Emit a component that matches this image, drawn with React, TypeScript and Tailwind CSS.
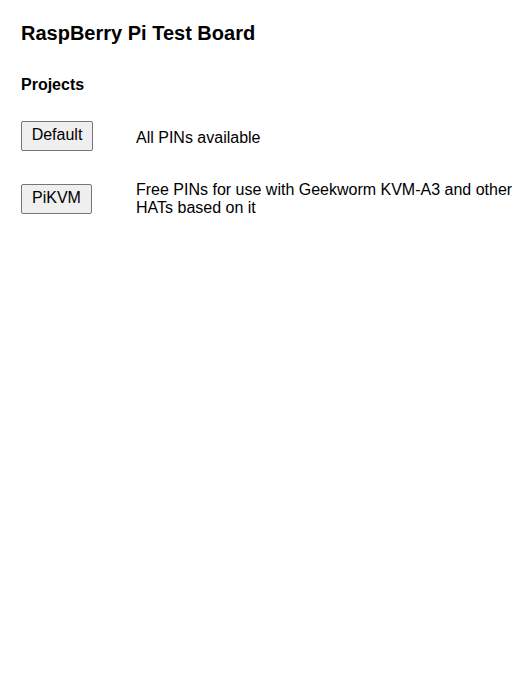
const projects = [
  {
    name: "Default",
    description: "All PINs available",
    width: "w-[72px]",
    textClass: "mt-[4px]",
  },
  {
    name: "PiKVM",
    description: "Free PINs for use with Geekworm KVM-A3 and other HATs based on it",
    width: "w-[71px]",
    textClass: "",
  },
];

export default function App() {
  return (
    <div className="min-h-[690px] bg-white pl-[21px] pr-[14px] pt-[22px] text-black font-['Liberation_Sans',Arial,sans-serif]">
      <h1 className="text-[20px] leading-[23px] font-bold">RaspBerry Pi Test Board</h1>

      <h2 className="mt-[31px] text-[16px] leading-[18px] font-bold">Projects</h2>

      <div className="mt-[27px] flex flex-col gap-[30px]">
        {projects.map((project) => (
          <div key={project.name} className="flex items-center">
            <div className="w-[115px] shrink-0">
              <button
                className={`${project.width} h-[30px] rounded-[2px] border border-[#767676] bg-[#efefef] pb-[2px] text-[16px] leading-[18px] text-black`}
              >
                {project.name}
              </button>
            </div>
            <p className={`${project.textClass} text-[16px] leading-[18px]`}>{project.description}</p>
          </div>
        ))}
      </div>
    </div>
  );
}
